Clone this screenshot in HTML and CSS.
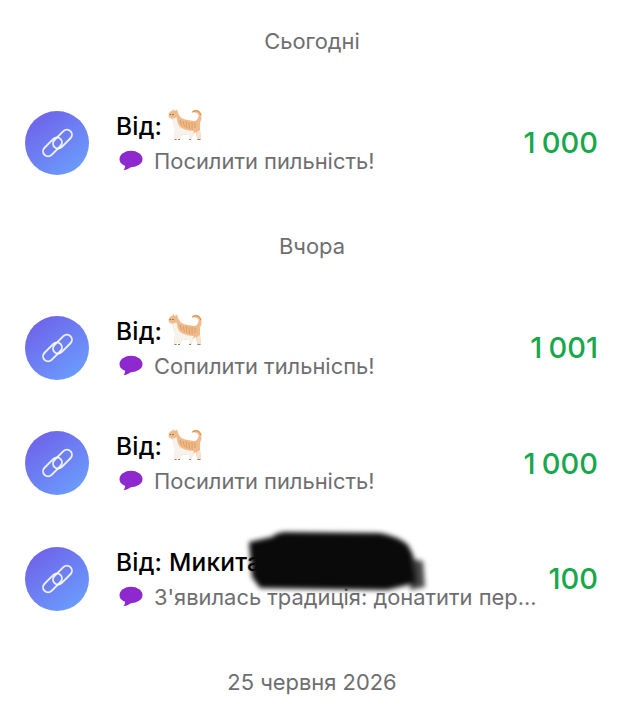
FILE: index.html
```html
<!DOCTYPE html>
<html lang="uk">
<head>
<meta charset="utf-8">
<title>Донати</title>
<link rel="stylesheet" href="styles.css">
</head>
<body>
<svg class="defs" width="0" height="0" aria-hidden="true">
  <defs>
    <linearGradient id="avatar-grad" x1="0.15" y1="0.05" x2="0.85" y2="0.95">
      <stop offset="0" stop-color="#6f62ea"/>
      <stop offset="1" stop-color="#6a9efc"/>
    </linearGradient>
    <symbol id="avatar" viewBox="0 0 64 64">
      <circle cx="32" cy="32" r="32" fill="url(#avatar-grad)"/>
      <g fill="none" stroke="#fff" stroke-opacity=".88" stroke-width="1.900" transform="rotate(-45 32.500 32)">
        <rect x="27.500" y="27.800" width="22.500" height="10" rx="5"/>
        <rect x="15" y="26.200" width="22.500" height="10" rx="5"/>
      </g>
    </symbol>
    <symbol id="bubble" viewBox="0 0 24 22">
      <ellipse cx="12" cy="9" rx="11.500" ry="8.300" fill="#8e28cf"/>
      <path d="M6 13 C6.500 16 6 18.500 4.500 20 C8 20 11 18 13 16 Z" fill="#8e28cf"/>
    </symbol>
    <symbol id="cat" viewBox="3 4 36 36">
      <path d="M6 12 L9 8 L10 5 L12 7 L14 5.500 L15 9 Q17 14 22 15.500 L31 17 Q34 17 35 14 Q36.500 11 34 9 Q31 7.500 29 9 Q28 7 31 6 Q37 5 38.500 11 Q39 15 37 19 Q37 23 37 26 L38 35 L36 36 L34.500 36 L33 28 L30 30 L28 36 L26 36 L26 30 Q22 31 19 30 L17 36 L15 36 L15 31 L13.500 36 L11.500 36 L12 24 Q10 18 9 14 L6 13.500 Z" fill="#f0bb8a"/>
      <ellipse cx="10.500" cy="11" rx="5" ry="4.300" fill="#f0bb8a"/>
      <path d="M6 13 L9 14.500 Q12 14.500 13.500 13 Q14 19 17 23 Q23 27 31 27 L30 30 L28 36 L26 36 L26 30 Q22 31 19 30 L17 36 L15 36 L15 31 L13.500 36 L11.500 36 L12 24 Q10 18 9 14 Z" fill="#f6f2ec"/>
      <path d="M33.500 28 L34.500 36 L36 36 L38 35 L37 26 Z" fill="#f3e4d2"/>
      <path d="M17 16 L18.500 21 M20 17 L21.500 23 M23 17 L24 24 M26 18 L26.500 25 M29 18 L29 25 M32 18.500 L32 24" stroke="#e09a5f" stroke-width="1" fill="none"/>
      <path d="M30 7.500 Q36 5 38 11" stroke="#d98a4a" stroke-width="1" fill="none"/>
      <path d="M11.500 35.500 H13.500 M15 35.500 H17 M26 35.500 H28 M34.500 35.500 H37.500" stroke="#8d8074" stroke-width="1"/>
      <circle cx="10" cy="10.500" r=".6" fill="#3a3027"/>
      <circle cx="7.200" cy="10.500" r=".5" fill="#3a3027"/>
    </symbol>
  </defs>
</svg>

<main class="page">
  <h2 class="day day-first">Сьогодні</h2>
  <ul class="list">
    <li class="row">
      <svg class="avatar"><use href="#avatar"/></svg>
      <div class="body">
        <div class="from"><span>Від:</span><svg class="cat"><use href="#cat"/></svg></div>
        <div class="msg"><svg class="bubble"><use href="#bubble"/></svg><span class="msg-text">Посилити пильність!</span></div>
      </div>
      <div class="amount">1 000</div>
    </li>
  </ul>

  <h2 class="day">Вчора</h2>
  <ul class="list">
    <li class="row">
      <svg class="avatar"><use href="#avatar"/></svg>
      <div class="body">
        <div class="from"><span>Від:</span><svg class="cat"><use href="#cat"/></svg></div>
        <div class="msg"><svg class="bubble"><use href="#bubble"/></svg><span class="msg-text">Сопилити тильніспь!</span></div>
      </div>
      <div class="amount">1 001</div>
    </li>
    <li class="row">
      <svg class="avatar"><use href="#avatar"/></svg>
      <div class="body">
        <div class="from"><span>Від:</span><svg class="cat"><use href="#cat"/></svg></div>
        <div class="msg"><svg class="bubble"><use href="#bubble"/></svg><span class="msg-text">Посилити пильність!</span></div>
      </div>
      <div class="amount">1 000</div>
    </li>
    <li class="row">
      <svg class="avatar"><use href="#avatar"/></svg>
      <div class="body">
        <div class="from"><span>Від: Микита</span></div>
        <div class="msg"><svg class="bubble"><use href="#bubble"/></svg><span class="msg-text">З'явилась традиція: донатити пер...</span></div>
      </div>
      <div class="amount">100</div>
      <svg class="scribble" viewBox="0 0 200 80" aria-hidden="true">
        <path class="scribble-fade" d="M170 34 L183 36 L185 62 L170 65 Z"/>
        <path class="scribble-ink" d="M9 17 L32 12 Q36 8 44 7 L140 8 Q160 12 168 20 L173 30 L176 58 L147 65 L20 63 L12 52 Z"/>
      </svg>
    </li>
  </ul>

  <h2 class="day">25 червня 2026</h2>
</main>
</body>
</html>
```
FILE: styles.css
```css
* {
  box-sizing: border-box;
}

html,
body {
  margin: 0;
  padding: 0;
  background: #fff;
}

body {
  font-family: Inter, "Liberation Sans", sans-serif;
  overflow: hidden;
}

.defs {
  position: absolute;
}

.page {
  display: flex;
  flex-direction: column;
  padding-top: 21px;
}

.day {
  height: 39px;
  margin: 25.500px 0 25px;
  display: flex;
  align-items: center;
  justify-content: center;
  font-size: 21.900px;
  font-weight: 400;
  color: #6e6e70;
}

.day-first {
  margin-top: 0;
  margin-bottom: 25px;
}

.list {
  list-style: none;
  margin: 0;
  padding: 0;
}

.row {
  position: relative;
  height: 115.500px;
  display: flex;
  align-items: center;
  padding: 0 26px 0 25px;
}

.avatar {
  width: 64px;
  height: 64px;
  flex: none;
}

.body {
  flex: 1;
  min-width: 0;
  margin-left: 27px;
  padding-bottom: 2px;
  display: flex;
  flex-direction: column;
  gap: 4px;
}

.from {
  display: flex;
  align-items: center;
  gap: 4px;
  height: 34px;
  font-size: 24.500px;
  font-weight: 500;
  letter-spacing: .2px;
  color: #000;
}

.cat {
  width: 36px;
  height: 36px;
  flex: none;
}

.msg {
  display: flex;
  align-items: center;
  gap: 11px;
  height: 28px;
  margin-left: 3px;
  font-size: 21.900px;
  color: #6e6e70;
  white-space: nowrap;
}

.bubble {
  width: 24px;
  height: 22px;
  flex: none;
}

.amount {
  flex: none;
  margin-left: 10px;
  font-size: 29px;
  font-weight: 500;
  word-spacing: -1.500px;
  color: #16a84a;
}

.scribble {
  position: absolute;
  left: 240px;
  top: 4px;
  width: 200px;
  height: 80px;
}

.scribble-ink {
  fill: #0a0a0a;
  filter: blur(2.500px);
}

.scribble-fade {
  fill: #0a0a0a;
  opacity: .75;
  filter: blur(2.500px);
}
```
